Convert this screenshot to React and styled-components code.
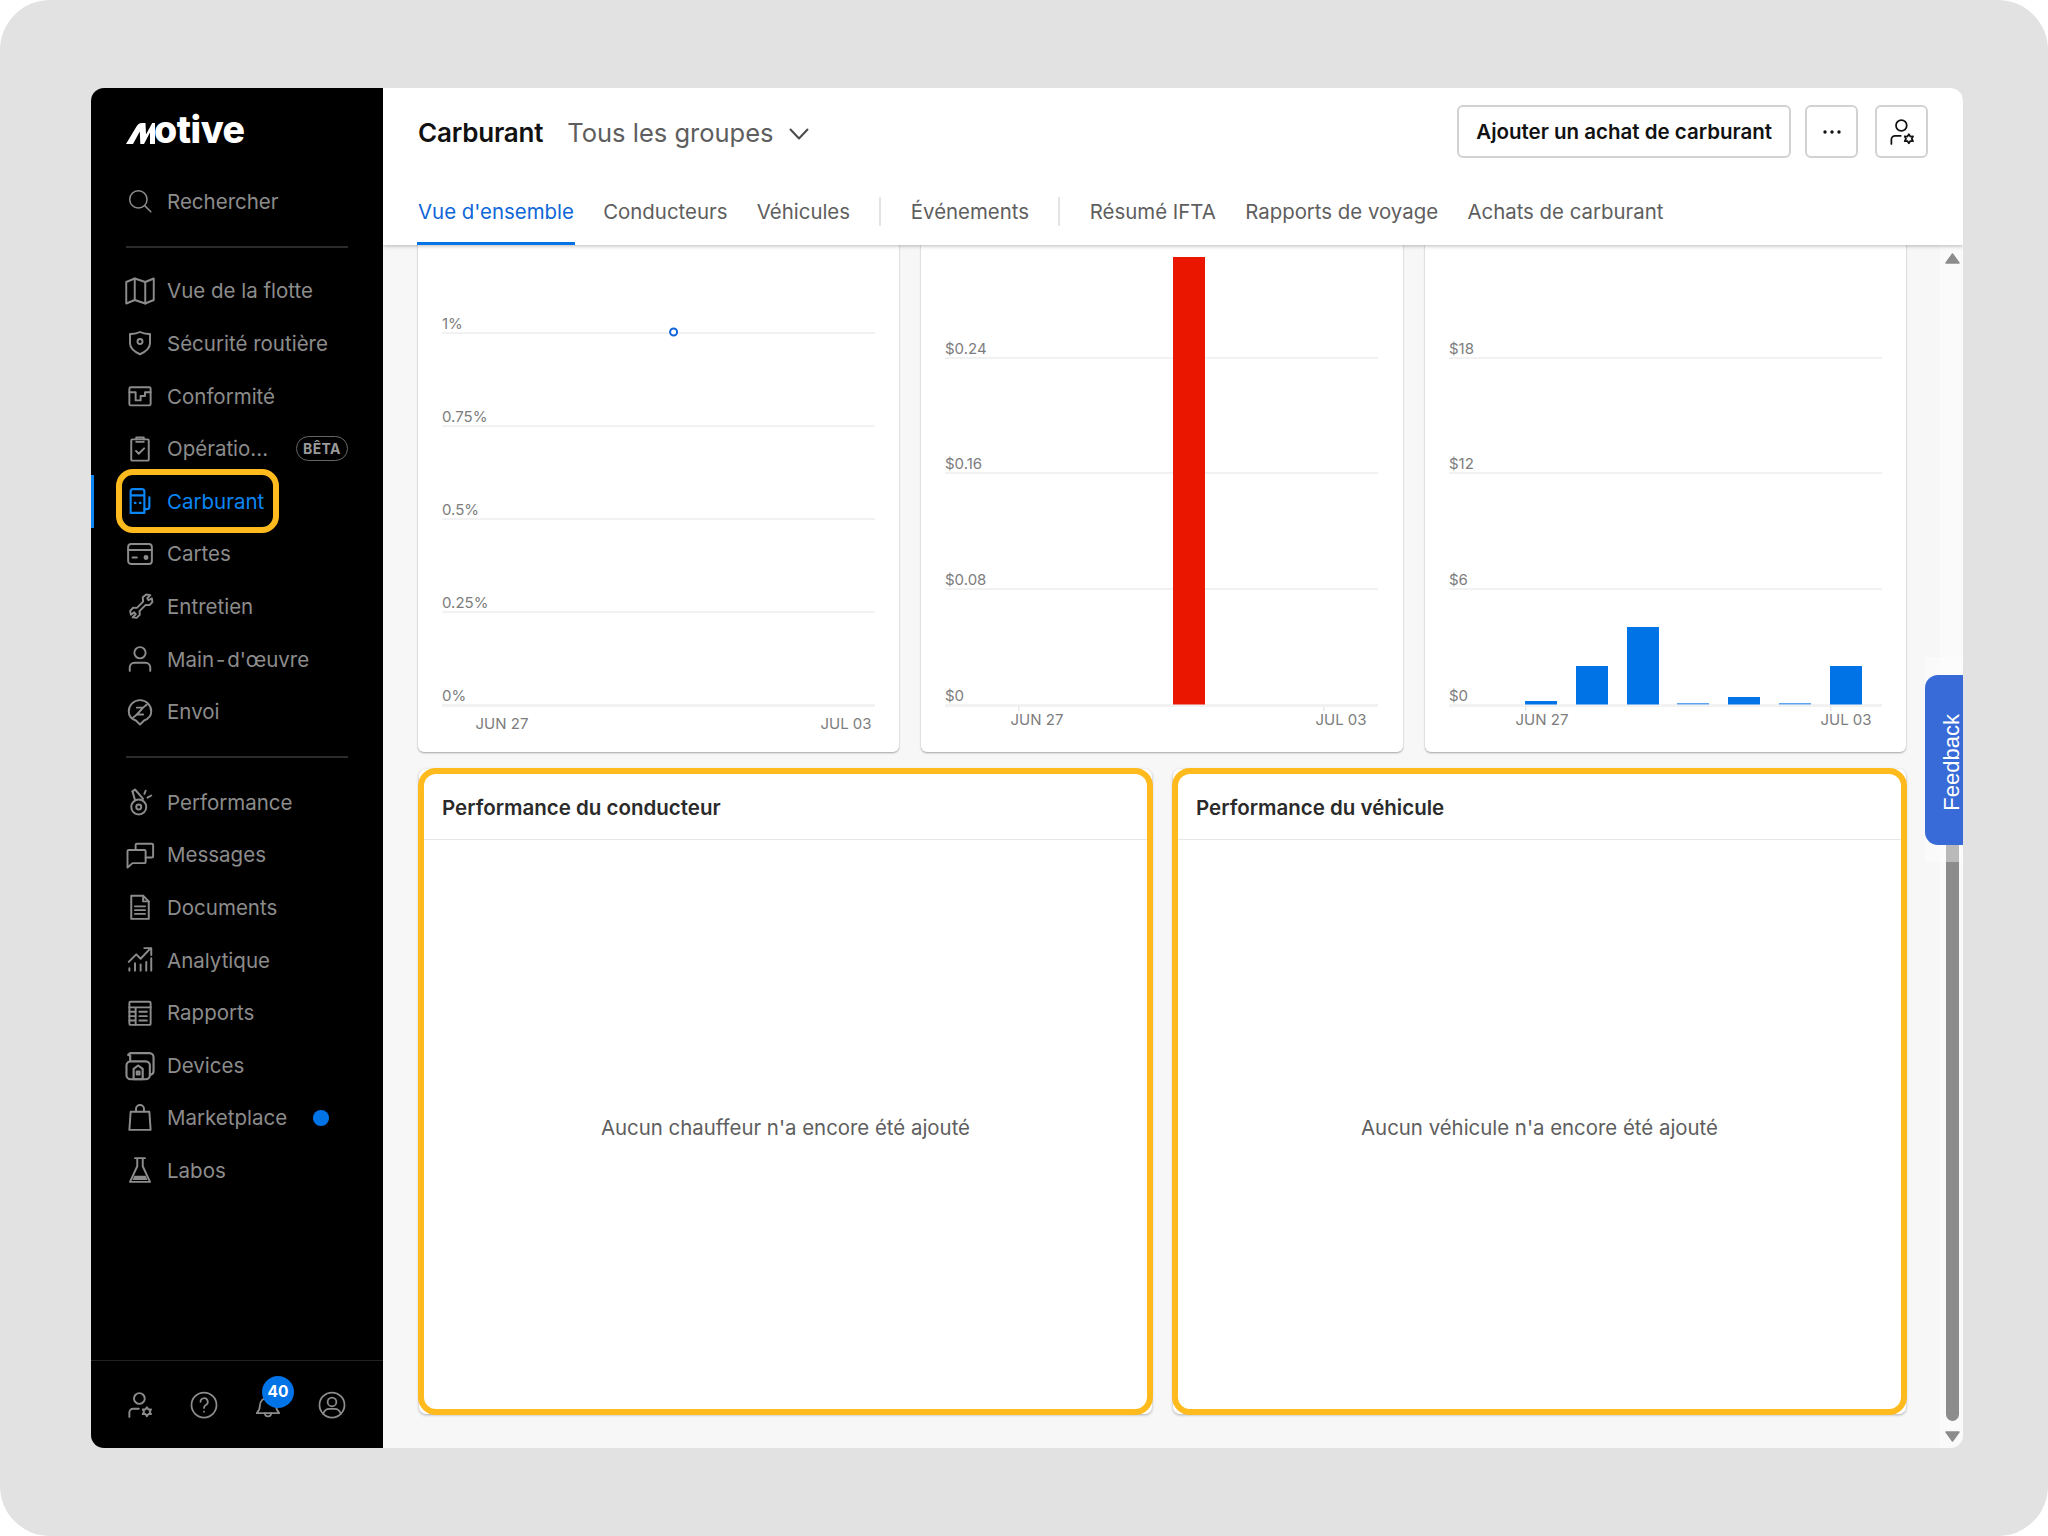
import React from "react";
import styled, { createGlobalStyle } from "styled-components";

const Global = createGlobalStyle`
  html, body { margin: 0; padding: 0; background: #fff; }
  body { font-family: Inter, "Liberation Sans", sans-serif; }
  * { box-sizing: border-box; }
`;

const Frame = styled.div`
  width: 2048px; height: 1536px; background: #e2e2e2; border-radius: 50px;
  padding: 88px 85px 88px 91px; overflow: hidden;
`;
const Window = styled.div`
  width: 1872px; height: 1360px; display: flex; border-radius: 13px; overflow: hidden; background: #f7f7f7;
`;
const Sidebar = styled.aside`
  width: 292px; flex-shrink: 0; background: #000; display: flex; flex-direction: column; color: #8c8c8c;
`;
const LogoBlock = styled.div`
  height: 87px; padding: 28px 0 0 35px; display: flex; align-items: flex-start;
`;
const LogoMark = styled.svg`
  width: 29px; height: 21px; margin-top: 7px; fill: #fff; flex-shrink: 0;
`;
const LogoText = styled.span`
  font-size: 37.5px; line-height: 28px; height: 28px; font-weight: 800; color: #fff; letter-spacing: -0.5px; margin-left: -1px;
`;
const Divider = styled.div`
  height: 2px; background: #2b2b2b; margin: ${p => p.$top}px 35px ${p => p.$bottom}px;
`;
const NavRow = styled.div`
  position: relative; height: 52.6px; flex-shrink: 0; display: flex; align-items: center; padding: 0 35px 0 34px;
  font-size: 20.5px; color: ${p => (p.$active ? "#0a86f5" : "#8c8c8c")};
`;
const IconSlot = styled.span`
  width: 30px; height: 30px; flex-shrink: 0; display: flex; align-items: center; justify-content: center; margin-right: 12px;
  color: ${p => (p.$active ? "#0a86f5" : "#8c8c8c")};
`;
const Glyph = styled.svg`
  width: ${p => p.$size || 30}px; height: ${p => p.$size || 30}px; fill: none; stroke: currentColor;
  stroke-width: ${p => p.$weight || 1.55}; stroke-linecap: round; stroke-linejoin: round; flex-shrink: 0;
`;
const BetaPill = styled.span`
  margin-left: auto; width: 52px; height: 25px; border: 1.5px solid #666; border-radius: 13px; font-size: 14px; font-weight: 700;
  color: #9a9a9a; display: flex; align-items: center; justify-content: center; letter-spacing: 0.4px;
`;
const NewDot = styled.span`
  width: 15.5px; height: 15.5px; border-radius: 50%; background: #0073e6; margin-left: 26px;
`;
const ActiveEdge = styled.span`
  position: absolute; left: 0; top: 0; width: 3px; height: 100%; background: #0a86f5;
`;
const NavRing = styled.span`
  position: absolute; left: 25px; top: -5.7px; width: 163px; height: 64px; border: 6px solid #ffba1e; border-radius: 17px;
`;
const Spacer = styled.div` flex: 1; `;
const SideFooter = styled.div`
  height: 88px; border-top: 1px solid #222; display: flex; align-items: center; padding: 0 0 0 34px; gap: 34px;
`;
const FootIcon = styled.span`
  position: relative; width: 30px; height: 30px; display: flex; align-items: center; justify-content: center; color: #8c8c8c;
`;
const Badge = styled.span`
  position: absolute; left: 9px; top: -14px; width: 32px; height: 32px; border-radius: 50%; background: #0073e6; color: #fff;
  font-size: 15.5px; font-weight: 700; display: flex; align-items: center; justify-content: center;
`;

const Main = styled.main`
  position: relative; flex: 1; min-width: 0; display: flex; flex-direction: column;
`;
const Header = styled.header`
  position: relative; z-index: 2; height: 157px; flex-shrink: 0; background: #fff; box-shadow: 0 1px 4px rgba(0,0,0,.28);
  padding: 0 35px; display: flex; flex-direction: column;
`;
const TitleBar = styled.div`
  height: 94px; padding-top: 17px; display: flex; align-items: flex-start;
`;
const TitleGroup = styled.div`
  display: flex; align-items: center; height: 53px; margin-top: 1px;
`;
const Title = styled.h1`
  margin: 0; font-size: 26px; font-weight: 600; color: #111; letter-spacing: -0.2px;
`;
const GroupName = styled.span`
  margin-left: 24px; font-size: 25.5px; color: #5e5e5e;
`;
const Chevron = styled.svg`
  width: 22px; height: 14px; margin-left: 14px; margin-top: 3px; fill: none; stroke: #4a4a4a; stroke-width: 2; stroke-linecap: round; stroke-linejoin: round;
`;
const Actions = styled.div`
  margin-left: auto; display: flex;
`;
const Button = styled.button`
  height: 53px; min-width: 53px; padding: ${p => (p.$square ? 0 : "0 17px")}; margin-left: ${p => p.$gap || 0}px; background: #fff; border: 2px solid #d2d2d2; border-radius: 6px;
  font-family: Inter, sans-serif; font-size: 20.5px; font-weight: 600; color: #111; display: flex; align-items: center; justify-content: center;
`;
const Tabs = styled.nav`
  flex: 1; display: flex; align-items: stretch; gap: 29.4px;
`;
const Tab = styled.div`
  position: relative; display: flex; align-items: center; height: 63px; padding-bottom: 5px; font-size: 20.4px;
  color: ${p => (p.$active ? "#0f66d8" : "#5e5e5e")};
  ${p => p.$active && "&::after { content: ''; position: absolute; left: -1px; right: -1px; bottom: 0; height: 3px; background: #0073e6; }"}
`;
const TabSep = styled.div`
  width: 2px; height: 29px; margin-top: 15px; background: #e4e4e4;
`;

const ScrollRegion = styled.div`
  flex: 1; min-height: 0; overflow: hidden; display: flex;
`;
const Content = styled.div`
  flex: 1; min-width: 0; display: flex; flex-direction: column; justify-content: flex-end; gap: 16px; padding: 0 33px 33px 35px;
`;
const ChartRow = styled.div`
  flex-shrink: 0; height: 520px; margin-right: 1px; display: grid; grid-template-columns: repeat(3, 1fr); gap: 22px;
`;
const ChartCard = styled.section`
  background: #fff; border-radius: 6px; box-shadow: 0 1px 2px 0 rgba(0,0,0,.34); display: flex; flex-direction: column; justify-content: flex-end; overflow: hidden;
`;
const ChartSvg = styled.svg`
  display: block; width: 100%; height: 500px; flex-shrink: 0;
  text { font-family: Inter, sans-serif; font-size: 15px; fill: #7d7d7d; }
`;
const PanelRow = styled.div`
  flex-shrink: 0; height: 647px; display: grid; grid-template-columns: 1fr 1fr; gap: 19px;
`;
const Panel = styled.section`
  position: relative; margin: 1px; background: #fff; border-radius: 7px; box-shadow: 0 1px 3px rgba(0,0,0,.3); display: flex; flex-direction: column;
`;
const PanelRing = styled.span`
  position: absolute; inset: -1px; border: 6px solid #ffba1e; border-radius: 18px; pointer-events: none;
`;
const PanelHead = styled.h2`
  margin: 0 4px; height: 70.5px; padding: 20px 0 0 19px; border-bottom: 1.5px solid #e6e6e6; font-size: 20.5px; font-weight: 600; color: #2a2a2a;
  line-height: 38px;
`;
const PanelBody = styled.div`
  flex: 1; display: flex; align-items: center; justify-content: center; font-size: 20.4px; color: #5e5e5e; padding-top: 2px;
`;

const Scrollbar = styled.div`
  width: 23px; flex-shrink: 0; background: #fafafa; display: flex; flex-direction: column; align-items: center; padding: 8px 0 6px 1px;
`;
const ScrollArrow = styled.svg`
  width: 15px; height: 11px; fill: #8c8c8c; stroke: #8c8c8c; stroke-width: 1.5; stroke-linejoin: round;
`;
const Thumb = styled.div`
  width: 13px; height: 722px; margin-top: auto; margin-bottom: 10px; background: #8c8c8c; border-radius: 0 0 7px 7px;
`;
const FeedbackBox = styled.div`
  position: absolute; right: 0; top: 569px; width: 38px; height: 205px; background: rgba(255,255,255,.4); display: flex; align-items: center; z-index: 1;
`;
const FeedbackTab = styled.div`
  width: 38px; height: 170px; background: #386bd7; border-radius: 13px 0 0 13px; color: #fff; display: flex; align-items: center; justify-content: center; overflow: hidden;
  font-family: "Liberation Sans", sans-serif; font-size: 22px;
`;
const FeedbackLabel = styled.span`
  writing-mode: vertical-rl; transform: rotate(180deg); margin-left: 16px; margin-top: 5px; line-height: .8;
`;

const I = ({ children, size, vb = 24, weight }) => (
  <Glyph viewBox={`0 0 ${vb} ${vb}`} $size={size} $weight={weight}>{children}</Glyph>
);

const userGearShape = (
  <>
    <circle cx="11.500" cy="6.800" r="4.300" />
    <path d="M3.500 21.500V18a3 3 0 0 1 3-3H11" />
    <path d="M17.500 13.800l1.200 1.800 2.100-.1-1 1.900 1 1.900-2.100-.1-1.200 1.800-1.200-1.800-2.100.1 1-1.900-1-1.900 2.100.1z" />
  </>
);

const icons = {
  search: <I size={26} weight={1.4}><circle cx="10.500" cy="10.500" r="8" /><path d="M16.500 16.500 22 22" /></I>,
  map: <I size={30}><path d="M1 4.800 7.800 2l8.400 2.800L23 2v17.200L16.200 22l-8.400-2.800L1 22z" /><path d="M7.800 2v17.200M16.200 4.800V22" /></I>,
  shield: <I><path d="M12 3.200c2.600 1.300 5.300 1.700 8 1.500v7.300c0 4.300-3.300 6.900-8 9-4.700-2.100-8-4.700-8-9V4.700c2.700.2 5.400-.2 8-1.500z" /><circle cx="12" cy="10.800" r="2" /></I>,
  compliance: <I><rect x="3.500" y="5" width="17" height="14.500" rx="1.200" /><path d="M3.500 9H8.500v6.500h4V12h3.500V9h4.500" /></I>,
  clipboard: <I><rect x="5" y="4.300" width="14" height="17" rx=".8" /><path d="M9 4.300V2.800h6v1.500M9 6.300h6M8.800 13.500l2.200 2.300 4.300-4.300" /></I>,
  fuel: <I weight={1.7}><path d="M4.500 21.500V4.500a2 2 0 0 1 2-2h7a2 2 0 0 1 2 2v17zM4.500 7.500h11" /><path d="M19.500 9v7.500a2 2 0 0 1-2 2h-2" /><path d="M8 13.500h.3M12 13.500h.3" strokeWidth="1.900" /></I>,
  card: <I><rect x="2.500" y="4" width="19" height="16" rx="2.500" /><path d="M2.500 8.800h19M6 14.800h3.500" /><circle cx="16.800" cy="14.800" r="1.200" fill="currentColor" /></I>,
  wrench: <I><path d="M14.200 5 17 2.800l3.300.5-2.500 2.500 1 1.600 2.700-1.500.4 3-2.300 2.400-3-.2-5 5 .2 3-2.500 2.400-3.200-.4 2.500-2.500-1.200-1.500-2.700 1.800-.6-3 2.400-2.500 3 .1 5-5z" /></I>,
  user: <I><circle cx="12" cy="7" r="4.500" /><path d="M3.800 21.500v-2.700a3.800 3.800 0 0 1 3.800-3.800h8.800a3.800 3.800 0 0 1 3.800 3.800v2.700" /></I>,
  dispatch: <I><path d="M12 22l-3.300-3.200C5.200 17.500 3 14.700 3 11.500a9 9 0 0 1 18 0c0 3.200-2.200 6-5.700 7.300z" /><path d="M9.500 8.500h5L9.500 14h5M6.500 16.500l3-2.500M14.500 8.500l3-2.500" /></I>,
  performance: <I><path d="M6 3.500l2-1.500 6.500 7.500" /><path d="M6 3.500l2 7" /><circle cx="11" cy="16" r="6" /><circle cx="11" cy="16" r="2" /><path d="M15.500 5.500l1-2.500M18 8.500l3-1.700" /></I>,
  messages: <I><path d="M8.500 8V4a1 1 0 0 1 1-1H21.500a1 1 0 0 1 1 1v9a1 1 0 0 1-1 1h-5" /><path d="M2 22V9a1 1 0 0 1 1-1h12.500a1 1 0 0 1 1 1v8.500a1 1 0 0 1-1 1H6z" /></I>,
  doc: <I><path d="M5 3h9.500L19 7.500V21.500H5z" /><path d="M14.500 3v4.500H19M8 11.500h8M8 14.500h8M8 17.500h8" /></I>,
  analytics: <I><path d="M3 13.500 9 7.500l3.500 3.500 8-8.500M15.500 2.500h5.500v5.500" /><path d="M3.500 20.500v-2M8 20.500v-6M12.500 20.500v-5M17 20.500v-7M21 20.500v-10" /></I>,
  report: <I><rect x="3.500" y="3" width="17" height="18.500" rx="1" /><path d="M3.500 7.500h17M8.500 7.500v14M11.500 11h6M11.500 14.500h6M11.500 18h6M3.500 11h5M3.500 14.500h5M3.500 18h5" /></I>,
  devices: <I size={33}><path d="M4.500 8.500V4.800l-1.500-.5L4.500 3h14a3 3 0 0 1 3 3v10a3 3 0 0 1-2 2.800" /><rect x="1.800" y="9" width="17" height="13" rx="3" /><path d="M7 22v-7.500l3.300-2.500 3.300 2.500V22z" /><rect x="9.300" y="16.500" width="2" height="2" /></I>,
  bag: <I><path d="M4.500 7h15l1 14.500h-17zM8.800 7V4.800a3.200 3.200 0 0 1 6.400 0V7" /></I>,
  flask: <I><path d="M8 2.500h8M9.800 2.500v6.500L4 21.500h16L14.200 9V2.500" /><path d="M7.500 16.500h9l1.500 3.500H6z" fill="currentColor" stroke="none" /></I>,
  userGear: <I>{userGearShape}</I>,
  userGearDark: <I weight={1.4}>{userGearShape}</I>,
  help: <I weight={1.4}><circle cx="12" cy="12" r="10" /><path d="M9.200 9.500a2.900 2.900 0 1 1 4.300 2.500c-1 .6-1.500 1.100-1.500 2.300M12 17.300v.1" /></I>,
  bell: <I weight={1.4}><path d="M3 18.500c1.500-1.500 2.500-3 2.500-6a6.500 6.500 0 0 1 13 0c0 3 1 4.500 2.500 6z" /><path d="M9.500 18.500a2.500 2.500 0 0 0 5 0" /></I>,
  account: <I weight={1.4}><circle cx="12" cy="12" r="10" /><circle cx="12" cy="9.500" r="3.500" /><path d="M5 19c.8-2.800 3-4 5-4h4c2 0 4.200 1.200 5 4" /></I>,
  dots: <I size={24}><g fill="currentColor" stroke="none"><circle cx="5" cy="12" r="1.700" /><circle cx="12" cy="12" r="1.700" /><circle cx="19" cy="12" r="1.700" /></g></I>,
};

const primaryNav = [
  ["map", "Vue de la flotte"],
  ["shield", "Sécurité routière"],
  ["compliance", "Conformité"],
  ["clipboard", "Opératio...", "beta"],
  ["fuel", "Carburant", "active"],
  ["card", "Cartes"],
  ["wrench", "Entretien"],
  ["user", "Main\u200A-\u200Ad'œuvre"],
  ["dispatch", "Envoi"],
];
const secondaryNav = [
  ["performance", "Performance"],
  ["messages", "Messages"],
  ["doc", "Documents"],
  ["analytics", "Analytique"],
  ["report", "Rapports"],
  ["devices", "Devices"],
  ["bag", "Marketplace", "dot"],
  ["flask", "Labos"],
];

const Nav = ({ item }) => {
  const [icon, label, flag] = item;
  const active = flag === "active";
  return (
    <NavRow $active={active}>
      {active && <ActiveEdge />}
      {active && <NavRing />}
      <IconSlot $active={active}>{icons[icon]}</IconSlot>
      <span>{label}</span>
      {flag === "beta" && <BetaPill>BÊTA</BetaPill>}
      {flag === "dot" && <NewDot />}
    </NavRow>
  );
};

const Chart = ({ lines, xLabels, ticks, labelY, bars = [], dot }) => (
  <ChartSvg>
    {lines.map(([y, label], i) => (
      <g key={label}>
        <rect x="24" y={y - 1} width="433" height={i === lines.length - 1 ? 3 : 2} fill="#f2f2f2" />
        <text x="24" y={y - 4}>{label}</text>
      </g>
    ))}
    {ticks && ticks.map(x => <rect key={x} x={x} y="454" width="1.500" height="5" fill="#e8e8e8" />)}
    {bars.map(([x, top, color]) => (
      <rect key={x} x={x} y={top} width="32" height={452.500 - top} fill={color} />
    ))}
    {dot && <circle cx={dot[0]} cy={dot[1]} r="3.500" fill="#fff" stroke="#0f66d8" strokeWidth="2" />}
    {xLabels.map(([x, label]) => (
      <text key={label} x={x} y={labelY} textAnchor="middle">{label}</text>
    ))}
  </ChartSvg>
);

const percent = [[81, "1%"], [174, "0.75%"], [267, "0.5%"], [360, "0.25%"], [453, "0%"]];
const cents = [[106, "$0.24"], [221, "$0.16"], [337, "$0.08"], [453, "$0"]];
const dollars = [[106, "$18"], [221, "$12"], [337, "$6"], [453, "$0"]];
const blue = "#0073e6";
const pale = "#5ea5f0";
const dollarBars = [
  [100, 449, blue], [151, 414, blue], [202, 375, blue], [252, 451, pale],
  [303, 445, blue], [354, 451, pale], [405, 414, blue],
];

export default function App() {
  return (
    <>
      <Global />
      <Frame>
        <Window>
          <Sidebar>
            <LogoBlock>
              <LogoMark viewBox="0 0 29 21">
                <path d="M0 21 10.500 3.500C12 1 13.500 0 16 0h3.500l.5 11.500L26.200 0H29v21h-5V9.500L18 21h-3.700L13.800 8.500 7 21z" />
              </LogoMark>
              <LogoText>otive</LogoText>
            </LogoBlock>
            <NavRow>
              <IconSlot>{icons.search}</IconSlot>
              <span>Rechercher</span>
            </NavRow>
            <Divider $top={18} $bottom={17} />
            {primaryNav.map(item => <Nav key={item[1]} item={item} />)}
            <Divider $top={18} $bottom={18} />
            {secondaryNav.map(item => <Nav key={item[1]} item={item} />)}
            <Spacer />
            <SideFooter>
              <FootIcon>{icons.userGear}</FootIcon>
              <FootIcon>{icons.help}</FootIcon>
              <FootIcon>{icons.bell}<Badge>40</Badge></FootIcon>
              <FootIcon>{icons.account}</FootIcon>
            </SideFooter>
          </Sidebar>
          <Main>
            <Header>
              <TitleBar>
                <TitleGroup>
                  <Title>Carburant</Title>
                  <GroupName>Tous les groupes</GroupName>
                  <Chevron viewBox="0 0 22 14"><path d="M2.500 2.500 11 11.500l8.500-9" /></Chevron>
                </TitleGroup>
                <Actions>
                  <Button>Ajouter un achat de carburant</Button>
                  <Button $square $gap={14}>{icons.dots}</Button>
                  <Button $square $gap={17}>{icons.userGearDark}</Button>
                </Actions>
              </TitleBar>
              <Tabs>
                <Tab $active>Vue d'ensemble</Tab>
                <Tab>Conducteurs</Tab>
                <Tab>Véhicules</Tab>
                <TabSep />
                <Tab>Événements</Tab>
                <TabSep />
                <Tab>Résumé IFTA</Tab>
                <Tab>Rapports de voyage</Tab>
                <Tab>Achats de carburant</Tab>
              </Tabs>
            </Header>
            <ScrollRegion>
              <Content>
                <ChartRow>
                  <ChartCard>
                    <Chart lines={percent} labelY={477} dot={[255.600, 80]} xLabels={[[84, "JUN 27"], [428, "JUL 03"]]} />
                  </ChartCard>
                  <ChartCard>
                    <Chart lines={cents} labelY={473} ticks={[97, 402]} bars={[[252, 5, "#ea1600"]]} xLabels={[[116, "JUN 27"], [420, "JUL 03"]]} />
                  </ChartCard>
                  <ChartCard>
                    <Chart lines={dollars} labelY={473} ticks={[100, 405]} bars={dollarBars} xLabels={[[117, "JUN 27"], [421, "JUL 03"]]} />
                  </ChartCard>
                </ChartRow>
                <PanelRow>
                  <Panel>
                    <PanelHead>Performance du conducteur</PanelHead>
                    <PanelBody>Aucun chauffeur n'a encore été ajouté</PanelBody>
                    <PanelRing />
                  </Panel>
                  <Panel>
                    <PanelHead>Performance du véhicule</PanelHead>
                    <PanelBody>Aucun véhicule n'a encore été ajouté</PanelBody>
                    <PanelRing />
                  </Panel>
                </PanelRow>
              </Content>
              <Scrollbar>
                <ScrollArrow viewBox="0 0 15 11"><path d="M7.500 1 14 10H1z" /></ScrollArrow>
                <Thumb />
                <ScrollArrow viewBox="0 0 15 11"><path d="M7.500 10 14 1H1z" /></ScrollArrow>
              </Scrollbar>
            </ScrollRegion>
            <FeedbackBox>
              <FeedbackTab><FeedbackLabel>Feedback</FeedbackLabel></FeedbackTab>
            </FeedbackBox>
          </Main>
        </Window>
      </Frame>
    </>
  );
}
